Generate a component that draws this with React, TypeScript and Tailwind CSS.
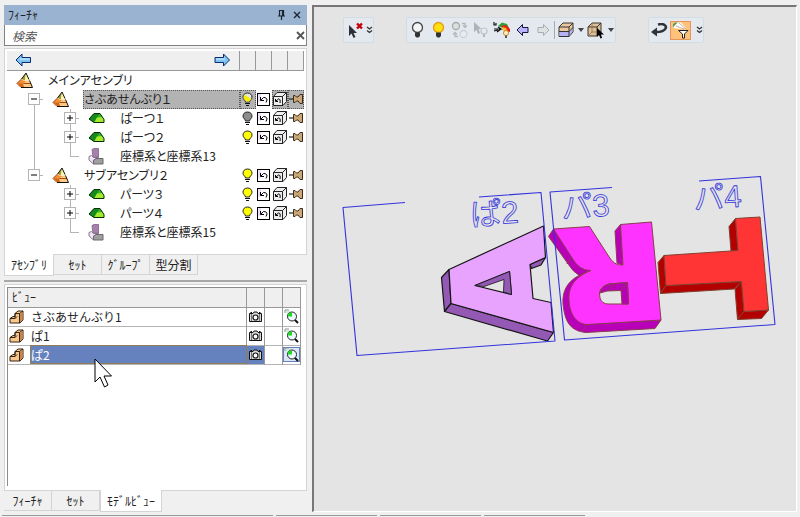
import React from "react";

type Light = "on" | "off" | "half";

type TreeItem = {
  label: string;
  level: 0 | 1 | 2;
  kind: "assembly" | "part" | "csys";
  last?: boolean;
  underLast?: boolean;
  light?: Light;
  selected?: boolean;
};

const tree: TreeItem[] = [
  { label: "メインアセンブリ", level: 0, kind: "assembly" },
  { label: "さぶあせんぶり１", level: 1, kind: "assembly", light: "half", selected: true },
  { label: "ぱーつ１", level: 2, kind: "part", light: "off" },
  { label: "ぱーつ２", level: 2, kind: "part", light: "on" },
  { label: "座標系と座標系13", level: 2, kind: "csys", last: true },
  { label: "サブアセンブリ２", level: 1, kind: "assembly", light: "on", last: true },
  { label: "パーツ３", level: 2, kind: "part", light: "on", underLast: true },
  { label: "パーツ４", level: 2, kind: "part", light: "on", underLast: true },
  { label: "座標系と座標系15", level: 2, kind: "csys", last: true, underLast: true },
];

const views = ["さぶあせんぶり1", "ぱ1", "ぱ2"];

/* ---------- tree icons ---------- */

function AssemblyIcon() {
  return (
    <svg width="18" height="17" viewBox="0 0 18 17">
      <path d="M10 1 L5.500 7 L9 8.500 L13 7.500 Z" fill="#f4ef9a" />
      <path d="M10 1 L5.500 7 L9 8.500 Z" fill="#a39a35" />
      <path d="M10 1 L13 7.500 L9 8.500 Z" fill="#fbf7b0" />
      <path d="M10 1 L13 7.500 M10 1 L5.500 7" stroke="#111" strokeWidth="1" />
      <path d="M1 11 L5 7.500 L9 9 L14 8.500 L8 12 Z" fill="#f2903a" />
      <path d="M1 11 L7.500 11.500 L8 15 L5 15 Z" fill="#d9650f" />
      <path d="M7.500 11.500 L9.500 9.500 L14 8.500 L16 15 L8 15 Z" fill="#ffc983" />
      <path d="M5.500 7 L1 11.500 L5 15.500 M7.500 11.500 H15" fill="none" stroke="#a34a08" strokeWidth="1" />
      <path d="M5 15.500 H16.500 M13.500 8.500 L16.500 15.500" stroke="#111" strokeWidth="1" fill="none" />
    </svg>
  );
}

function PartIcon() {
  return (
    <svg width="18" height="17" viewBox="0 0 18 17">
      <path d="M1 9 L6 3.500 H12 L16 9 V12.500 H6 Z" fill="#35b52a" />
      <path d="M1 9 L6 3.500 H12 L8.500 8 L6 12.500 Z" fill="#168a1c" />
      <path d="M6.500 12 L9 7.500 L15 7 L16 12 Z" fill="#a5ea2c" />
      <path d="M1 9 L6 3.500 H12 L16 9.500 V12.500 H6 Z" fill="none" stroke="#052e08" strokeWidth="1" />
    </svg>
  );
}

function CsysIcon() {
  return (
    <svg width="18" height="17" viewBox="0 0 18 17">
      <path d="M4 1.500 L6 0.500 H10.500 V9 L5 9.500 Z" fill="#a97fae" stroke="#7c6382" strokeWidth="0.800" />
      <path d="M1 8.500 L3.500 7.500 L5.500 9.500 H10.500 L5.500 12 V16 L1 12 Z" fill="#efe4f1" stroke="#7e6b83" strokeWidth="0.900" />
      <path d="M5.500 16 V12.500 L8 10.500 H15 V16 Z" fill="#9f9f9f" stroke="#6a6570" strokeWidth="1" />
    </svg>
  );
}

const lightFill: Record<Light, string> = { on: "#ffff00", off: "#8d8d8d", half: "#e4e4e4" };

function LightIcon({ state }: { state: Light }) {
  return (
    <svg width="11" height="15" viewBox="0 0 11 15" className="mx-auto block">
      <path d="M5.500 1 C2.500 1 1 3 1 5.200 C1 7.500 3.500 8.300 3.500 10 H7.500 C7.500 8.300 10 7.500 10 5.200 C10 3 8.500 1 5.500 1 Z" fill={lightFill[state]} stroke="#222" strokeWidth="1" />
      {state === "half" && <path d="M2 2.500 L9.500 7 L7 9.500 H4 L1.500 6 Z" fill="#f6ee00" />}
      <path d="M3 11.500 H8 M4 13.500 H7" stroke="#111" strokeWidth="1.200" />
    </svg>
  );
}

function UndoBoxIcon() {
  return (
    <svg width="13" height="13" viewBox="0 0 13 13" className="mx-auto block">
      <rect x="0.500" y="0.500" width="12" height="12" fill="#fff" stroke="#000" />
      <path d="M1 1 H4 V9 H1 Z" fill="#efdcff" />
      <path d="M3.500 4 V7.500 H7 M4 7 L6.500 4.500 C9 4.500 10 5.500 10 7 L9 9.500" fill="none" stroke="#000" strokeWidth="1" />
    </svg>
  );
}

function CubeBoxIcon() {
  return (
    <svg width="14" height="14" viewBox="0 0 14 14" className="mx-auto block">
      <path d="M0.500 4.500 L4 0.500 H13.500 V9.500 L10 13.500 H0.500 Z" fill="#eee" stroke="#222" />
      <path d="M0.500 4.500 H9.500 V13 M9.500 4.500 L13.500 0.500" fill="none" stroke="#222" />
      <path d="M2.500 7 V9.500 H5 M3 9 L5.500 7 C7 7 7.500 8 7 11" fill="none" stroke="#000" />
    </svg>
  );
}

function TackIcon() {
  return (
    <svg width="14" height="12" viewBox="0 0 14 12" className="mx-auto block">
      <path d="M0 6 H5" stroke="#222" strokeWidth="1.200" />
      <path d="M4.500 2.500 H6 L7.500 4 H9 L11 1.500 H13.500 V10.500 H11 L9 8 H7.500 L6 9.500 H4.500 Z" fill="#c9a777" stroke="#3c2a16" strokeWidth="1" />
    </svg>
  );
}

function Arrow({ right = false }: { right?: boolean }) {
  return (
    <svg width="17" height="14" viewBox="0 0 17 14" className="block">
      <path
        d={right ? "M15.500 7 L9.500 1 V4.500 H1 V9.500 H9.500 V13 Z" : "M1 7 L7 1 V4.500 H15.500 V9.500 H7 V13 Z"}
        fill="#7fc4f2"
        stroke="#0b2b6b"
        strokeWidth="1"
      />
      <path d={right ? "M2 6 H11" : "M5 6 H15"} stroke="#d4efff" strokeWidth="1" />
    </svg>
  );
}

/* ---------- tree ---------- */

function Guide({ item }: { item: TreeItem }) {
  const hasChildren = item.kind !== "csys";
  return (
    <>
      {item.level === 2 && (
        <svg width="36" height="19" className="block shrink-0">
          {!item.underLast && <path d="M18.500 0 V19" stroke="#b4b4b4" />}
        </svg>
      )}
      <span className="grid h-[19px] w-9 shrink-0 place-items-center">
        <svg width="36" height="19" className="[grid-area:1/1]">
          {!(item.level === 1 && !item.last) && <path d="M18.500 0 V10" stroke="#b4b4b4" />}
          {!item.last && <path d="M18.500 9 V19" stroke="#b4b4b4" />}
          <path d="M18.500 9.500 H27" stroke="#b4b4b4" />
        </svg>
        {hasChildren && (
          <button
            type="button"
            aria-label={item.level === 1 ? "折りたたむ" : "展開"}
            className="grid size-3 place-items-center border border-[#b4b4b4] bg-white [grid-area:1/1]"
          >
            <svg width="6" height="6" viewBox="0 0 6 6">
              <path d={item.level === 1 ? "M0 3 H6" : "M0 3 H6 M3 0 V6"} stroke="#000" />
            </svg>
          </button>
        )}
      </span>
    </>
  );
}

function TreeRow({ item }: { item: TreeItem }) {
  const mark = item.selected ? "bg-[#b3b3b3] outline-1 -outline-offset-1 outline-dotted outline-[#555]" : "";
  return (
    <tr className="h-[19px]">
      <td className="p-0">
        <div className="flex items-center pl-[9px]">
          {item.level > 0 && <Guide item={item} />}
          <span className="w-[31px] shrink-0">
            {item.kind === "assembly" && <AssemblyIcon />}
            {item.kind === "part" && <PartIcon />}
            {item.kind === "csys" && <CsysIcon />}
          </span>
          <span className={`h-[19px] flex-1 pl-px leading-[18px] whitespace-nowrap ${mark}`}>{item.label}</span>
        </div>
      </td>
      <td className={`p-0 ${mark}`}>{item.light && <LightIcon state={item.light} />}</td>
      <td className="p-0">{item.light && <UndoBoxIcon />}</td>
      <td className={`p-0 ${mark}`}>{item.light && <CubeBoxIcon />}</td>
      <td className={`p-0 ${mark}`}>{item.light && <TackIcon />}</td>
    </tr>
  );
}

function FeatureTree() {
  return (
    <div className="h-[207px] border border-[#d4d4d4] bg-white px-0.5 pt-0.5">
      <table className="w-full table-fixed border-collapse">
        <colgroup>
          <col />
          <col className="w-4" />
          <col className="w-4" />
          <col className="w-4" />
          <col className="w-4" />
        </colgroup>
        <thead>
          <tr className="h-[19px] border-b border-[#999] bg-[#efefef]">
            <th className="p-0">
              <div className="flex justify-between px-2">
                <button type="button" aria-label="前へ"><Arrow /></button>
                <button type="button" aria-label="次へ"><Arrow right /></button>
              </div>
            </th>
            <th className="border-l border-[#999] p-0" />
            <th className="border-l border-[#999] p-0" />
            <th className="border-l border-[#999] p-0" />
            <th className="border-x border-[#999] p-0" />
          </tr>
        </thead>
        <tbody>
          {tree.map((item) => (
            <TreeRow key={item.label} item={item} />
          ))}
        </tbody>
      </table>
    </div>
  );
}

function Tabs({ labels, active }: { labels: string[]; active: number }) {
  return (
    <div role="tablist" className="flex h-[21px] items-start">
      {labels.map((label, i) => (
        <button
          key={label}
          type="button"
          role="tab"
          aria-selected={i === active}
          className={
            i === active
              ? "-mt-px h-[22px] border border-t-0 border-[#d4d4d4] bg-white px-[6px] leading-5"
              : "h-5 min-w-12 border-r border-b border-[#d4d4d4] px-[5px] leading-5"
          }
        >
          {label}
        </button>
      ))}
    </div>
  );
}

/* ---------- model views ---------- */

function StepIcon() {
  return (
    <svg width="15" height="14" viewBox="0 0 15 14" className="ml-px block">
      <path d="M1 8.500 L4 6.500 H6 V3.500 L9 1 H14 V10 L11 13 H1 Z" fill="#f7c98f" stroke="#3a230e" strokeWidth="1" />
      <path d="M1 8.500 H6 L6 3.500 H10.500 V13 M10.500 3.500 L14 1 M6 8.500 L8 6.500" fill="none" stroke="#3a230e" strokeWidth="1" />
      <path d="M11 4 L13.500 2 V10 L11 12 Z" fill="#c98748" />
    </svg>
  );
}

function CameraIcon() {
  return (
    <svg width="13" height="11" viewBox="0 0 13 11" className="mx-auto block">
      <path d="M0.500 2.500 H4 L5 1 H8 L9 2.500 H12.500 V10.500 H0.500 Z" fill="#d8d8d8" stroke="#111" strokeWidth="1" />
      <circle cx="6.500" cy="6.500" r="2.500" fill="#fff" stroke="#111" strokeWidth="1.200" />
      <path d="M2.500 3 V10 M10.500 3 V10" stroke="#777" />
      <path d="M1.500 1.500 H3 M10 1.500 H11.500" stroke="#111" />
    </svg>
  );
}

function ZoomViewIcon() {
  return (
    <svg width="15" height="15" viewBox="0 0 15 15" className="mx-auto block">
      <path d="M1 4 V1 H5" fill="none" stroke="#8a8f96" />
      <path d="M2 2 H6 V6 H3 Z" fill="#c5f2cb" />
      <circle cx="8" cy="7.500" r="4.500" fill="#e9fbff" stroke="#222" strokeWidth="1" />
      <path d="M8 7.500 V3.500 A4 4 0 0 0 4 7.500 Z" fill="#14e014" />
      <path d="M11 11 L14 14" stroke="#111" strokeWidth="2" />
    </svg>
  );
}

function MouseCursor() {
  return (
    <svg width="19" height="31" viewBox="0 0 19 31" className="pointer-events-none absolute top-3 left-16 z-10">
      <path d="M1 1 V24 L6 19 L10.500 29 L14 27 L10 18 H17.500 Z" fill="#fff" stroke="#000" strokeWidth="1" />
    </svg>
  );
}

function ViewList() {
  return (
    <div className="flex min-h-0 flex-1 flex-col border border-[#d4d4d4] bg-white pt-0.5 pr-[5px] pb-1 pl-0.5">
      <div className="flex-1 border-t border-l border-[#8c8c8c]">
        <table className="w-full table-fixed border-collapse [font-feature-settings:normal]">
          <colgroup>
            <col className="w-[22px]" />
            <col />
            <col className="w-[18px]" />
            <col className="w-[18px]" />
            <col className="w-[18px]" />
          </colgroup>
          <thead>
            <tr className="h-[19px] border-b border-[#999] bg-[#efefef]">
              <th colSpan={2} className="p-0 pl-1 text-left leading-4 font-normal">ﾋﾞｭｰ</th>
              <th className="border-l border-[#999] p-0" />
              <th className="border-l border-[#999] p-0" />
              <th className="border-x border-[#999] p-0" />
            </tr>
          </thead>
          <tbody>
            {views.map((name, i) => {
              const selected = i === 2;
              const cell = selected ? "bg-[#6582bf]" : "";
              return (
                <tr key={name} className="h-[19px] border-b border-[#b4b4b4]">
                  <td className="p-0"><StepIcon /></td>
                  <td className={`relative p-0 pl-px leading-[17px] ${cell} ${selected ? "text-white outline-1 -outline-offset-1 outline-[#917c56]" : ""}`}>
                    {name}
                    {selected && <MouseCursor />}
                  </td>
                  <td className={`border-l border-[#999] p-0 ${cell}`}><CameraIcon /></td>
                  <td className="border-l border-[#999] p-0" />
                  <td className="border-x border-[#999] p-0">
                    <div className={selected ? "bg-[#dce6f6] ring-1 ring-[#6582bf] ring-inset" : ""}><ZoomViewIcon /></div>
                  </td>
                </tr>
              );
            })}
          </tbody>
        </table>
      </div>
    </div>
  );
}

/* ---------- viewport toolbars ---------- */

function Tool({ label, active, children }: { label: string; active?: boolean; children: React.ReactNode }) {
  return (
    <button
      type="button"
      aria-label={label}
      className={`grid w-[21px] shrink-0 place-items-center ${active ? "h-[19px] border border-[#e8935a] bg-[#ffc27a]" : "h-5"}`}
    >
      {children}
    </button>
  );
}

function Toolbar({ children }: { children: React.ReactNode }) {
  return <div role="toolbar" className="flex h-[26px] items-center rounded-xs border border-[#d2dce3] bg-[#e3e9ee]">{children}</div>;
}

function More() {
  return (
    <button type="button" aria-label="その他" className="grid h-5 w-2 place-items-center">
      <svg width="7" height="8" viewBox="0 0 7 8">
        <path d="M1 1 L3.500 3 L6 1 M1 4.500 L3.500 6.500 L6 4.500" fill="none" stroke="#333" strokeWidth="1.300" />
      </svg>
    </button>
  );
}

function Caret({ label }: { label: string }) {
  return (
    <button type="button" aria-label={label} className="grid h-5 w-[9px] place-items-center">
      <svg width="6" height="4" viewBox="0 0 6 4"><path d="M0 0 H6 L3 4 Z" fill="#444" /></svg>
    </button>
  );
}

function Bulb({ fill, rim }: { fill: string; rim: string }) {
  return (
    <svg width="13" height="18" viewBox="0 0 13 18">
      <circle cx="6.500" cy="6.500" r="5" fill={fill} stroke={rim} strokeWidth="1.300" />
      <path d="M4 11.500 H9 V15 L7.500 16.500 H5.500 L4 15 Z" fill="#333" />
    </svg>
  );
}

function BlockArrow({ fill, stroke, right = false }: { fill: string; stroke: string; right?: boolean }) {
  return (
    <svg width="13" height="14" viewBox="0 0 13 14">
      <path d={right ? "M12 7 L6.500 1.500 V4.500 H1 V9.500 H6.500 V12.500 Z" : "M1 7 L6.500 1.500 V4.500 H12 V9.500 H6.500 V12.500 Z"} fill={fill} stroke={stroke} />
    </svg>
  );
}

function Toolbars() {
  return (
    <div className="flex items-start gap-8 pt-2.5 pl-[29px]">
      <Toolbar>
        <Tool label="選択解除">
          <svg width="18" height="18" viewBox="0 0 18 18">
            <path d="M3 4 V15 L5.500 12.500 L7.500 17 L9.500 16 L7.500 12 H11 Z" fill="#2c3038" />
            <path d="M11 2.500 L16 7.500 M16 2.500 L11 7.500" stroke="#c8000c" strokeWidth="2.400" />
          </svg>
        </Tool>
        <More />
      </Toolbar>
      <Toolbar>
        <Tool label="非表示"><Bulb fill="#f4f4f4" rim="#444" /></Tool>
        <Tool label="表示"><Bulb fill="#ffdf10" rim="#e59a18" /></Tool>
        <Tool label="表示切替">
          <svg width="17" height="18" viewBox="0 0 17 18" fill="none" stroke="#b4b8bb" strokeWidth="1.300">
            <circle cx="5" cy="5" r="3.500" fill="#dcdedf" stroke="#a7aaad" />
            <circle cx="12.500" cy="13" r="3.500" fill="#e8ecef" stroke="#ccd1d5" />
            <path d="M11 2.500 H14 V6 M12 4.500 L14 6.500 L16 4.500 M7 15.500 H4 V12 M2 13.500 L4 11.500 L6 13.500" />
          </svg>
        </Tool>
        <Tool label="選択表示">
          <svg width="17" height="18" viewBox="0 0 17 18">
            <path d="M2 1 V11 L4.500 9 L6 13 L8 12 L6.500 8 H9.500 Z" fill="#b0b3b6" />
            <circle cx="12" cy="10" r="3" fill="#e6eaed" stroke="#bfc3c6" strokeWidth="1.200" />
            <path d="M11 13 H13 V16 H11 Z" fill="#b5b8bb" />
          </svg>
        </Tool>
        <Tool label="色表示">
          <svg width="18" height="18" viewBox="0 0 18 18">
            <path d="M5 5 L9 1.500 L14 3 L16 7 L12 8 Z" fill="#2fa13a" />
            <path d="M8 5 L13 4 L17 8 V11 L12 10 Z" fill="#e42218" />
            <path d="M9 6 L13 7 L15 11 L11 11 Z" fill="#ffbe20" />
            <path d="M1 1 V4 H3 V2 M1 8 H8 L5 6 M8 8 L4 11 M1 10 L5 9" fill="none" stroke="#111" strokeWidth="1.200" />
            <circle cx="13" cy="12" r="2.500" fill="#fff1c5" stroke="#bc8b33" />
            <path d="M12 14.500 H14 V17 H12 Z" fill="#555" />
          </svg>
        </Tool>
        <Tool label="戻る"><BlockArrow fill="#b8b2ff" stroke="#15153a" /></Tool>
        <Tool label="進む"><BlockArrow right fill="#dfe2e4" stroke="#a9adb0" /></Tool>
        <span className="h-[18px] w-px bg-[#a4aaae]" />
        <Tool label="表示スタイル">
          <svg width="16" height="16" viewBox="0 0 16 16">
            <path d="M1 5 L5 1 H15 V10 L11 14.500 H1 Z" fill="#ebc89d" stroke="#333" />
            <path d="M1.500 10 H11 L14.500 6.500 V10 L11 14 H1.500 Z" fill="#b6b1f5" />
            <path d="M1 5 H11 V14.500 M11 5 L15 1 M1 9.500 H11 L15 5.500" fill="none" stroke="#333" />
          </svg>
        </Tool>
        <Caret label="表示スタイルの選択" />
        <Tool label="要素選択">
          <svg width="17" height="17" viewBox="0 0 17 17">
            <path d="M1 5 L5 1 H14 V10 L10 14 H1 Z" fill="#dfc09a" stroke="#3d3429" />
            <path d="M1 5 H10 V14 M10 5 L14 1" fill="none" stroke="#3d3429" />
            <path d="M5 1 V10 H14 M1 14 L5 10" fill="none" stroke="#8a7457" strokeWidth="0.800" />
            <path d="M10 6 V15 L12 13 L13.500 16.500 L15 16 L14 12.500 H17 Z" fill="#000" />
          </svg>
        </Tool>
        <Caret label="要素選択の種類" />
      </Toolbar>
      <Toolbar>
        <Tool label="元に戻す">
          <svg width="17" height="14" viewBox="0 0 17 14">
            <path d="M7 1.500 C13 0 16 3 14.500 5.500 C13 8.500 9 9 5 9" fill="none" stroke="#30343a" strokeWidth="2.500" />
            <path d="M0 9 L6 4.500 V13.500 Z" fill="#30343a" />
          </svg>
        </Tool>
        <Tool label="フィルタ" active>
          <svg width="18" height="17" viewBox="0 0 18 17">
            <path d="M1 6 V2 L4 0.500 H9 L14 6 L10 7 Z" fill="#fff" />
            <path d="M1 6 V2 L3 0.500 H6 L3 3 Z" fill="#55a060" />
            <path d="M4 4 L12 7 M7 1 L14 7" stroke="#c9b4a2" />
            <path d="M6.500 8.500 H16 L12.500 12 V16 H10.500 V12 Z" fill="#fff" stroke="#222" />
          </svg>
        </Tool>
        <span className="w-1" />
        <More />
      </Toolbar>
    </div>
  );
}

function Model() {
  return (
    <svg width="440" height="190" viewBox="340 172 440 190" className="mt-[129px] ml-[26px] block shrink-0" strokeLinejoin="round">
      <g stroke="#151515" strokeWidth="1.200">
        <path d="M449 269.500 L441.500 277.500 L444.500 311.500 L451 303.500 Z" fill="#9459b4" />
        <path d="M451 303.500 L444.500 311.500 L547.500 341 L553.500 332.500 Z" fill="#9459b4" />
        <path d="M530 264.500 L545.500 257.500 L541 265 L531.500 268.500 Z" fill="#9459b4" />
        <path fillRule="evenodd" d="M543.500 226 L449 269.500 L451 303.500 L553.500 332.500 L551 302.500 L533 298.500 L530 264.500 L545.500 257.500 Z M509.500 271.500 L475 285.500 L511.500 294.500 Z" fill="#e8a3ff" />
        <path d="M509.500 271.500 L475 285.500 L484 286.500 L504 279.500 L503.500 292 L511.500 294.500 Z" fill="#9459b4" strokeWidth="0.800" />
      </g>
      <g stroke="#8b3a4e" strokeWidth="1">
        <path d="M553.500 229 L548.500 236.500 L568.500 264.500 Q573 272 579.500 275.500 L591 270.500 Z" fill="#b700b7" />
        <path d="M620.500 224.500 L615 231 L617 263 L623 265 Z" fill="#b700b7" />
        <path d="M591 270.500 L578 276 C567 282 562 292 563 304 C565 323 571 331 586 332.500 L655 328.500 L661 320 L587 324 Z" fill="#b700b7" />
        <path d="M571.500 257 L567 264" />
        <path fillRule="evenodd" d="M589.500 226.500 L553.500 229 L571.500 257 Q579 271 591 270.500 C577 276 568 285 569 300 C570 318 579 324 587 324.500 L661 320 L651.500 222 L620.500 224.500 L623 265 Q614 266 608.500 256 Z M627.500 282.500 L609 284 Q597 287 600 298 Q602 304 608 304 H628.500 Z" fill="#ff33ff" />
        <path d="M627.500 282.500 L609 284 Q601 286 600 293 L607 291 L621 290.500 L622 304 H628.500 Z" fill="#b700b7" />
        <path d="M621 290.500 L627 283 M608 291 L614 284 M587 324 L582 332 M571.500 257 L567 264" />
      </g>
      <g stroke="#81402f" strokeWidth="1">
        <path d="M735.500 218.500 L729 226.500 L731 251 L738 250.500 Z" fill="#b30000" />
        <path d="M664 255.500 L658 262.500 L660.500 293.500 L666 285.500 Z" fill="#b30000" />
        <path d="M666 285.500 L660.500 293.500 L734 289 L741.500 281.500 Z" fill="#b30000" />
        <path d="M741.500 281.500 L735 289 L737.500 319.500 L744 311.500 Z" fill="#b30000" />
        <path d="M744 311.500 L737.500 319.500 L761.500 318.500 L768.500 310 Z" fill="#b30000" />
        <path d="M760 217 L735.500 218.500 L738 250.500 L664 255.500 L666 285.500 L741.500 281.500 L744 311.500 L768.500 310 Z" fill="#ff3535" />
      </g>
      <g fill="none" stroke="#3333dd" strokeWidth="1.100">
        <path d="M405 202.500 L343 207.500 L357 355.500 L555 341 L541 192.500 L479 197" />
        <path d="M612 187.500 L550 192 L564.500 340 L775 324.500 L760.500 176.500 L699 181" />
        <g strokeWidth="0.800" fontSize="31" className="font-['Liberation_Sans','Noto_Sans_CJK_JP',sans-serif]">
          <text x="471" y="226" transform="rotate(-4 471 226)">ぱ2</text>
          <text x="562" y="219" transform="rotate(-4 562 219)">パ3</text>
          <text x="694" y="210" transform="rotate(-4 694 210)">パ4</text>
        </g>
      </g>
    </svg>
  );
}

export default function App() {
  return (
    <div className="flex h-screen flex-col bg-[#f0f0f0] font-['Noto_Sans_CJK_JP',sans-serif] text-[12px] text-[#222]">
      <div className="flex min-h-0 flex-1">
        <aside className="flex w-[312px] shrink-0 flex-col pt-[5px] pr-[5px] pl-1 [font-feature-settings:'palt']">
          <header className="flex h-5 items-center justify-between bg-[#99b3d1] px-1 [font-feature-settings:normal]">
            <h1 className="leading-5">ﾌｨｰﾁｬ</h1>
            <div className="flex gap-1">
              <button type="button" aria-label="固定" className="grid size-3 place-items-center">
                <svg width="9" height="10" viewBox="0 0 9 10"><path d="M2.500 0.500 H6.500 V6 M2.500 0 V6 M5.500 1 V6 M1 6 H8 M4.500 6 V10" fill="none" stroke="#1b2430" strokeWidth="1.200" /></svg>
              </button>
              <button type="button" aria-label="閉じる" className="grid size-3 place-items-center">
                <svg width="8" height="8" viewBox="0 0 8 8"><path d="M1 1 L7 7 M7 1 L1 7" stroke="#1b2430" strokeWidth="1.300" /></svg>
              </button>
            </div>
          </header>
          <div className="flex h-[21px] items-center border border-t-0 border-[#828282] bg-white pl-[7px]">
            <input aria-label="検索" placeholder="検索" className="h-5 min-w-0 flex-1 italic outline-none placeholder:text-[#555]" />
            <button type="button" aria-label="検索をクリア" className="grid size-3 place-items-center">
              <svg width="9" height="9" viewBox="0 0 9 9"><path d="M1 1 L8 8 M8 1 L1 8" stroke="#555" strokeWidth="1.800" /></svg>
            </button>
          </div>
          <div className="h-0.5 shrink-0" />
          <FeatureTree />
          <Tabs labels={["ｱｾﾝﾌﾞﾘ", "ｾｯﾄ", "ｸﾞﾙｰﾌﾟ", "型分割"]} active={0} />
          <div className="mt-1 mb-0.5 h-0.5 shrink-0 bg-[#a9a9a9]" />
          <ViewList />
          <Tabs labels={["ﾌｨｰﾁｬ", "ｾｯﾄ", "ﾓﾃﾞﾙﾋﾞｭｰ"]} active={2} />
        </aside>
        <main className="mt-[5px] mr-[3px] flex min-w-0 flex-1 flex-col overflow-hidden border-t-2 border-r border-b border-l-2 border-t-[#777] border-r-white border-b-white border-l-[#777] bg-[#e4e4e4]">
          <Toolbars />
          <Model />
        </main>
      </div>
      <footer className="mt-[3px] flex h-0.5 shrink-0 gap-[3px] px-0.5">
        <span className="h-px w-[271px] bg-[#999]" />
        <span className="h-px w-[101px] bg-[#999]" />
        <span className="h-px w-[101px] bg-[#999]" />
        <span className="h-px w-[101px] bg-[#999]" />
      </footer>
    </div>
  );
}
